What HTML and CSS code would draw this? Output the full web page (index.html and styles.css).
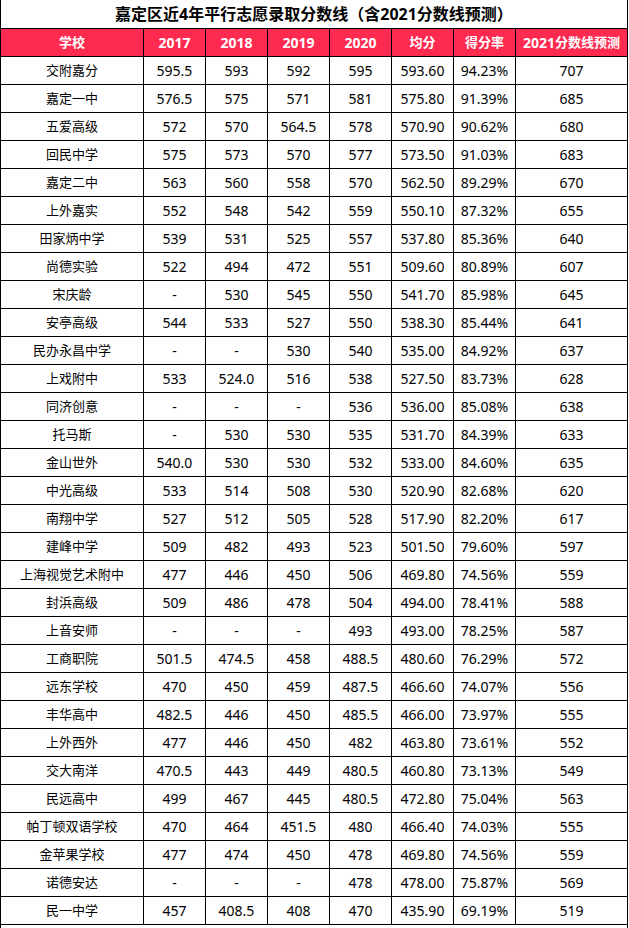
FILE: index.html
```html
<!DOCTYPE html>
<html lang="zh">
<head>
<meta charset="utf-8">
<title>嘉定区近4年平行志愿录取分数线</title>
<link rel="stylesheet" href="styles.css">
</head>
<body>
<div class="sheet">
  <div class="title">嘉定区近4年平行志愿录取分数线（含2021分数线预测）</div>
  <div class="row head"><div class="zh">学校</div><div>2017</div><div>2018</div><div>2019</div><div>2020</div><div class="zh">均分</div><div class="zh">得分率</div><div>2021<span class="zh">分数线预测</span></div></div>
  <div class="row"><div class="zh">交附嘉分</div><div>595.5</div><div>593</div><div>592</div><div>595</div><div>593.60</div><div>94.23%</div><div>707</div></div>
  <div class="row"><div class="zh">嘉定一中</div><div>576.5</div><div>575</div><div>571</div><div>581</div><div>575.80</div><div>91.39%</div><div>685</div></div>
  <div class="row"><div class="zh">五爱高级</div><div>572</div><div>570</div><div>564.5</div><div>578</div><div>570.90</div><div>90.62%</div><div>680</div></div>
  <div class="row"><div class="zh">回民中学</div><div>575</div><div>573</div><div>570</div><div>577</div><div>573.50</div><div>91.03%</div><div>683</div></div>
  <div class="row"><div class="zh">嘉定二中</div><div>563</div><div>560</div><div>558</div><div>570</div><div>562.50</div><div>89.29%</div><div>670</div></div>
  <div class="row"><div class="zh">上外嘉实</div><div>552</div><div>548</div><div>542</div><div>559</div><div>550.10</div><div>87.32%</div><div>655</div></div>
  <div class="row"><div class="zh">田家炳中学</div><div>539</div><div>531</div><div>525</div><div>557</div><div>537.80</div><div>85.36%</div><div>640</div></div>
  <div class="row"><div class="zh">尚德实验</div><div>522</div><div>494</div><div>472</div><div>551</div><div>509.60</div><div>80.89%</div><div>607</div></div>
  <div class="row"><div class="zh">宋庆龄</div><div>-</div><div>530</div><div>545</div><div>550</div><div>541.70</div><div>85.98%</div><div>645</div></div>
  <div class="row"><div class="zh">安亭高级</div><div>544</div><div>533</div><div>527</div><div>550</div><div>538.30</div><div>85.44%</div><div>641</div></div>
  <div class="row"><div class="zh">民办永昌中学</div><div>-</div><div>-</div><div>530</div><div>540</div><div>535.00</div><div>84.92%</div><div>637</div></div>
  <div class="row"><div class="zh">上戏附中</div><div>533</div><div>524.0</div><div>516</div><div>538</div><div>527.50</div><div>83.73%</div><div>628</div></div>
  <div class="row"><div class="zh">同济创意</div><div>-</div><div>-</div><div>-</div><div>536</div><div>536.00</div><div>85.08%</div><div>638</div></div>
  <div class="row"><div class="zh">托马斯</div><div>-</div><div>530</div><div>530</div><div>535</div><div>531.70</div><div>84.39%</div><div>633</div></div>
  <div class="row"><div class="zh">金山世外</div><div>540.0</div><div>530</div><div>530</div><div>532</div><div>533.00</div><div>84.60%</div><div>635</div></div>
  <div class="row"><div class="zh">中光高级</div><div>533</div><div>514</div><div>508</div><div>530</div><div>520.90</div><div>82.68%</div><div>620</div></div>
  <div class="row"><div class="zh">南翔中学</div><div>527</div><div>512</div><div>505</div><div>528</div><div>517.90</div><div>82.20%</div><div>617</div></div>
  <div class="row"><div class="zh">建峰中学</div><div>509</div><div>482</div><div>493</div><div>523</div><div>501.50</div><div>79.60%</div><div>597</div></div>
  <div class="row"><div class="zh">上海视觉艺术附中</div><div>477</div><div>446</div><div>450</div><div>506</div><div>469.80</div><div>74.56%</div><div>559</div></div>
  <div class="row"><div class="zh">封浜高级</div><div>509</div><div>486</div><div>478</div><div>504</div><div>494.00</div><div>78.41%</div><div>588</div></div>
  <div class="row"><div class="zh">上音安师</div><div>-</div><div>-</div><div>-</div><div>493</div><div>493.00</div><div>78.25%</div><div>587</div></div>
  <div class="row"><div class="zh">工商职院</div><div>501.5</div><div>474.5</div><div>458</div><div>488.5</div><div>480.60</div><div>76.29%</div><div>572</div></div>
  <div class="row"><div class="zh">远东学校</div><div>470</div><div>450</div><div>459</div><div>487.5</div><div>466.60</div><div>74.07%</div><div>556</div></div>
  <div class="row"><div class="zh">丰华高中</div><div>482.5</div><div>446</div><div>450</div><div>485.5</div><div>466.00</div><div>73.97%</div><div>555</div></div>
  <div class="row"><div class="zh">上外西外</div><div>477</div><div>446</div><div>450</div><div>482</div><div>463.80</div><div>73.61%</div><div>552</div></div>
  <div class="row"><div class="zh">交大南洋</div><div>470.5</div><div>443</div><div>449</div><div>480.5</div><div>460.80</div><div>73.13%</div><div>549</div></div>
  <div class="row"><div class="zh">民远高中</div><div>499</div><div>467</div><div>445</div><div>480.5</div><div>472.80</div><div>75.04%</div><div>563</div></div>
  <div class="row"><div class="zh">帕丁顿双语学校</div><div>470</div><div>464</div><div>451.5</div><div>480</div><div>466.40</div><div>74.03%</div><div>555</div></div>
  <div class="row"><div class="zh">金苹果学校</div><div>477</div><div>474</div><div>450</div><div>478</div><div>469.80</div><div>74.56%</div><div>559</div></div>
  <div class="row"><div class="zh">诺德安达</div><div>-</div><div>-</div><div>-</div><div>478</div><div>478.00</div><div>75.87%</div><div>569</div></div>
  <div class="row"><div class="zh">民一中学</div><div>457</div><div>408.5</div><div>408</div><div>470</div><div>435.90</div><div>69.19%</div><div>519</div></div>
  <div class="note"></div>
</div>
</body>
</html>
```

FILE: styles.css
```css
* {
  box-sizing: border-box;
}

html,
body {
  margin: 0;
  padding: 0;
}

body {
  background: #ffffff;
  color: #000000;
  font-family: "Noto Sans", "Noto Sans CJK SC", sans-serif;
  overflow: hidden;
}

.sheet {
  width: 628px;
  border-left: 1px solid #000000;
}

.title {
  height: 29px;
  border-right: 1px solid #000000;
  border-bottom: 1px solid #000000;
  display: flex;
  align-items: center;
  justify-content: center;
  font-size: 16px;
  font-weight: 700;
  line-height: 1;
}

.row {
  display: grid;
  grid-template-columns: 143px repeat(6, 62px) 112px;
  height: 28px;
}

.row > div {
  border-right: 1px solid #000000;
  border-bottom: 1px solid #000000;
  display: flex;
  align-items: center;
  justify-content: center;
  font-size: 14px;
  line-height: 1;
  white-space: nowrap;
}

.row .zh {
  font-size: 13px;
}

.head > div {
  background: #ff2a50;
  color: #ffffff;
  font-weight: 700;
}

.note {
  height: 3px;
  border-right: 1px solid #000000;
}
```
